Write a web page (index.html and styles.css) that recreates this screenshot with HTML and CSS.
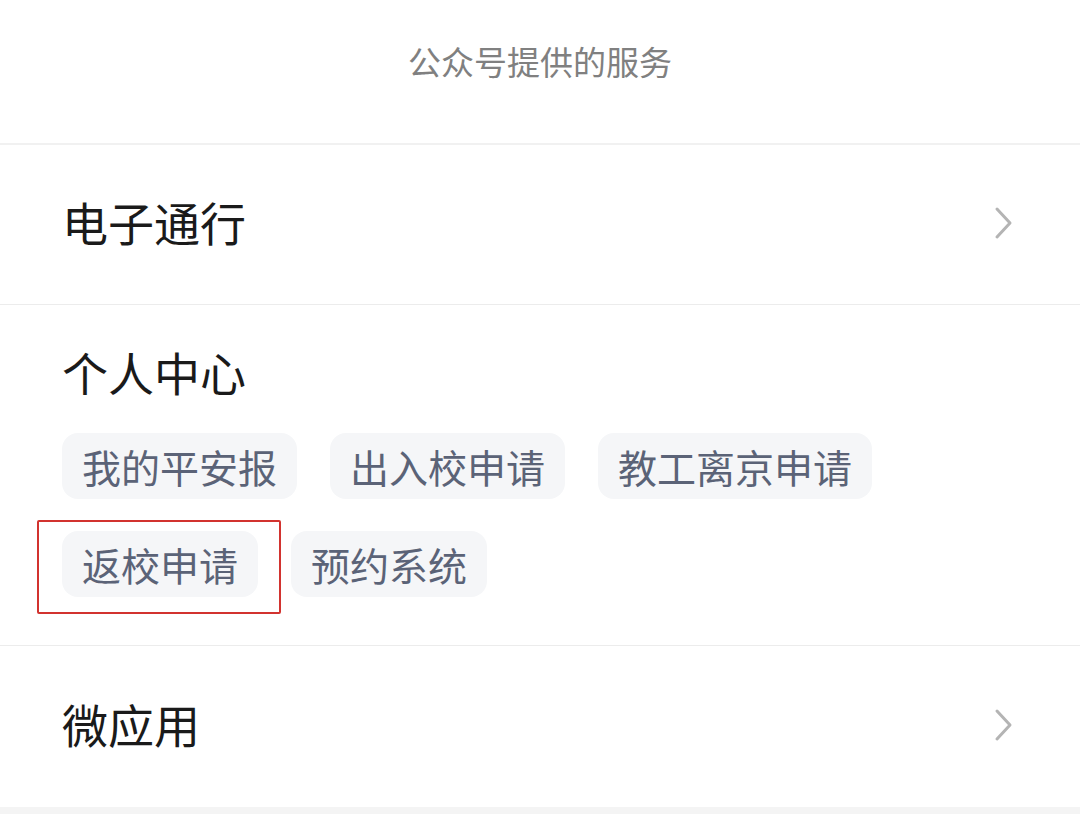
FILE: index.html
```html
<!DOCTYPE html>
<html lang="zh-CN">
<head>
<meta charset="utf-8">
<title>公众号提供的服务</title>
<link rel="stylesheet" href="styles.css">
</head>
<body>
<div class="page">
  <header class="header">公众号提供的服务</header>
  <div class="row">
    <span class="row-title">电子通行</span>
    <svg class="chev" width="20" height="34" viewBox="0 0 20 34"><polyline points="3,3 16,17 3,31" fill="none" stroke="#b4b4b4" stroke-width="3" stroke-linecap="round" stroke-linejoin="round"/></svg>
  </div>
  <div class="section">
    <div class="row-title">个人中心</div>
    <div class="chips">
      <span class="chip">我的平安报</span>
      <span class="chip">出入校申请</span>
      <span class="chip">教工离京申请</span>
    </div>
    <div class="chips">
      <span class="chip marked">返校申请</span>
      <span class="chip">预约系统</span>
    </div>
  </div>
  <div class="row last">
    <span class="row-title">微应用</span>
    <svg class="chev" width="20" height="34" viewBox="0 0 20 34"><polyline points="3,3 16,17 3,31" fill="none" stroke="#b4b4b4" stroke-width="3" stroke-linecap="round" stroke-linejoin="round"/></svg>
  </div>
  <div class="footer-band"></div>
</div>
</body>
</html>
```

FILE: styles.css
```css
html, body {
  margin: 0;
  padding: 0;
  background: #ffffff;
}
.page {
  width: 1080px;
  height: 814px;
  overflow: hidden;
  font-family: "Noto Sans CJK SC", "Noto Sans", sans-serif;
  display: flex;
  flex-direction: column;
}
.header {
  height: 145px;
  flex-shrink: 0;
  box-sizing: border-box;
  display: flex;
  justify-content: center;
  align-items: flex-start;
  font-size: 33px;
  line-height: 122px;
  color: #808080;
  border-bottom: 2px solid #f1f1f1;
}
.row {
  height: 160px;
  flex-shrink: 0;
  box-sizing: border-box;
  display: flex;
  align-items: center;
  justify-content: space-between;
  padding: 0 66px 7px 62px;
  border-bottom: 1px solid #ececec;
}
.row.last {
  height: 161px;
  border-bottom: none;
}
.row-title {
  font-size: 46px;
  line-height: 56px;
  color: #1a1a1a;
}
.chev {
  display: block;
  margin-top: 3px;
}
.section {
  flex-shrink: 0;
  height: 341px;
  box-sizing: border-box;
  padding: 38px 0 0 62px;
  border-bottom: 1px solid #ececec;
  display: flex;
  flex-direction: column;
}
.section .row-title {
  margin-bottom: 34px;
}
.chips {
  display: flex;
  gap: 33px;
  margin-bottom: 32px;
}
.chip {
  position: relative;
  height: 66px;
  line-height: 66px;
  padding: 0 20px;
  font-size: 39px;
  color: #5b6377;
  background: #f5f6f8;
  border-radius: 16px;
}
.chip.marked::after {
  content: "";
  position: absolute;
  top: -11px;
  left: -25px;
  right: -23px;
  bottom: -17px;
  border: 2px solid #d2332f;
  border-radius: 2px;
}
.footer-band {
  flex: 1;
  background: #f4f4f4;
}
```
